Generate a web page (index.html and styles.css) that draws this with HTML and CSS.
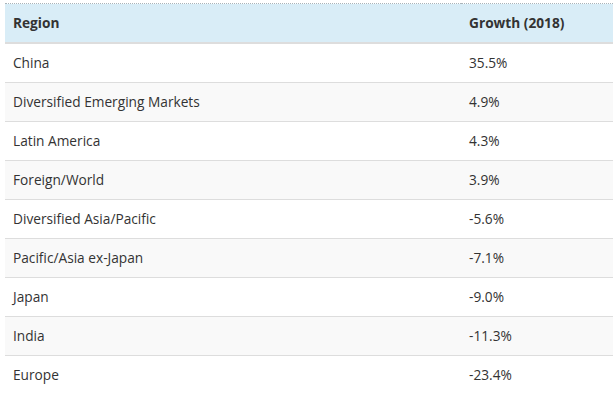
FILE: index.html
```html
<!DOCTYPE html>
<html>
<head>
<meta charset="utf-8">
<link rel="stylesheet" href="styles.css">
</head>
<body>
<div class="wrap">
<table class="growth">
<thead>
<tr><th class="col-region">Region</th><th>Growth (2018)</th></tr>
</thead>
<tbody>
<tr><td>China</td><td>35.5%</td></tr>
<tr><td>Diversified Emerging Markets</td><td>4.9%</td></tr>
<tr><td>Latin America</td><td>4.3%</td></tr>
<tr><td>Foreign/World</td><td>3.9%</td></tr>
<tr><td>Diversified Asia/Pacific</td><td>-5.6%</td></tr>
<tr><td>Pacific/Asia ex-Japan</td><td>-7.1%</td></tr>
<tr><td>Japan</td><td>-9.0%</td></tr>
<tr><td>India</td><td>-11.3%</td></tr>
<tr><td>Europe</td><td>-23.4%</td></tr>
</tbody>
</table>
</div>
</body>
</html>
```
FILE: styles.css
```css
html, body {
  margin: 0;
  padding: 0;
  background: #fff;
}
.wrap {
  padding: 3px 0 0 5px;
}
.growth {
  width: 608px;
  border-collapse: collapse;
  border-top: 1px dotted #a9b4ba;
  font-family: "Open Sans", "Noto Sans", sans-serif;
  font-size: 13.7px;
  color: #333;
}
.growth th, .growth td {
  text-align: left;
  padding: 9px 8px;
  line-height: 20px;
  vertical-align: middle;
}
.growth thead th {
  background: #d9edf7;
  font-weight: 700;
  border-bottom: 2px solid #ddd;
}
.growth .col-region {
  width: 440px;
}
.growth tbody td {
  border-top: 1px solid #ddd;
}
.growth tbody tr:first-child td {
  border-top: 0;
}
.growth tbody tr:nth-child(even) td {
  background: #f9f9f9;
}
```
